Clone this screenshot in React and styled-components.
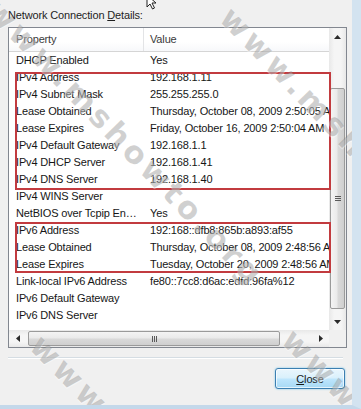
import React from "react";
import styled, { createGlobalStyle } from "styled-components";

const GlobalStyle = createGlobalStyle`
  html, body {
    margin: 0;
    padding: 0;
    background: #f0f0f0;
  }
  body {
    font-family: "Liberation Sans", Arial, sans-serif;
    font-size: 11px;
    letter-spacing: -0.15px;
    color: #1a1a1a;
  }
`;

const Window = styled.div`
  position: relative;
  width: 361px;
  height: 409px;
  box-sizing: border-box;
  padding-left: 8px;
  background: #f0f0f0;
  border-right: 9px solid #d3e3f0;
  border-bottom: 4px solid #c4d8ea;
  overflow: hidden;
  display: flex;
  flex-direction: column;
`;

const Label = styled.div`
  height: 27px;
  box-sizing: border-box;
  padding-top: 7px;
  line-height: 16px;
  color: #1e1e1e;
  u {
    text-decoration: underline;
  }
`;

const ListBox = styled.div`
  position: relative;
  width: 339px;
  height: 321px;
  box-sizing: border-box;
  border: 1px solid #828790;
  background: #fff;
  display: grid;
  grid-template-columns: 320px 17px;
  grid-template-rows: 302px 17px;
`;

const Viewport = styled.div`
  overflow: hidden;
  white-space: nowrap;
`;

const Header = styled.div`
  display: flex;
  height: 24px;
  box-sizing: border-box;
  border-bottom: 1px solid #d5d5d5;
  background: linear-gradient(#ffffff, #ffffff 60%, #f7f8fa);
`;

const HeaderCell = styled.div`
  flex: none;
  width: ${(p) => p.$w}px;
  box-sizing: border-box;
  padding-left: ${(p) => p.$pad}px;
  line-height: 23px;
  color: #3b3b3b;
  border-right: ${(p) => (p.$sep ? "1px solid #e3e4e6" : "none")};
`;

const Row = styled.div`
  display: flex;
  height: 17px;
  line-height: 17px;
`;

const Cell = styled.div`
  flex: none;
  width: ${(p) => p.$w}px;
  box-sizing: border-box;
  padding-left: ${(p) => p.$pad}px;
  padding-right: 4px;
  overflow: hidden;
  text-overflow: ${(p) => (p.$ellipsis ? "ellipsis" : "clip")};
  color: #161616;
`;

const VScroll = styled.div`
  display: flex;
  flex-direction: column;
  background: linear-gradient(90deg, #e8e8e8, #f5f5f5 30%, #f5f5f5 70%, #e8e8e8);
`;

const HScroll = styled.div`
  display: flex;
  background: linear-gradient(#e8e8e8, #f5f5f5 30%, #f5f5f5 70%, #e8e8e8);
`;

const Corner = styled.div`
  background: #f0f0f0;
`;

const ArrowBtn = styled.div`
  flex: none;
  width: 17px;
  height: 17px;
  display: flex;
  align-items: center;
  justify-content: center;
`;

const Track = styled.div`
  flex: 1;
  display: flex;
  flex-direction: ${(p) => (p.$vertical ? "column" : "row")};
`;

const Thumb = styled.div`
  flex: none;
  box-sizing: border-box;
  border: 1px solid #9a9a9a;
  border-radius: 2px;
  display: flex;
  align-items: center;
  justify-content: center;
  ${(p) =>
    p.$vertical
      ? `width: 15px; margin-left: 1px; background: linear-gradient(90deg, #f4f4f4, #eaeaea 45%, #d9d9d9 55%, #cfcfcf);`
      : `height: 15px; margin-top: 1px; background: linear-gradient(#f4f4f4, #eaeaea 45%, #d9d9d9 55%, #cfcfcf);`}
`;

const Grip = styled.div`
  display: flex;
  flex-direction: ${(p) => (p.$vertical ? "column" : "row")};
  gap: 1px;
  span {
    display: block;
    background: #5a5a5a;
    ${(p) => (p.$vertical ? "width: 6px; height: 1px;" : "width: 1px; height: 6px;")}
  }
`;

const Highlight = styled.div`
  position: absolute;
  left: 6px;
  top: ${(p) => p.$top}px;
  width: 316px;
  height: ${(p) => p.$h}px;
  box-sizing: border-box;
  border: 2px solid #c23b3f;
  pointer-events: none;
`;

const Separator = styled.div`
  margin-top: 9px;
  width: 335px;
  border-top: 1px solid #d5dde3;
  border-bottom: 1px solid #ffffff;
`;

const ButtonRow = styled.div`
  display: flex;
  justify-content: flex-end;
  margin-top: 9px;
  padding-right: 7px;
`;

const CloseButton = styled.button`
  width: 70px;
  height: 21px;
  box-sizing: border-box;
  border: 1px solid #3c7fb1;
  border-radius: 3px;
  background: linear-gradient(#eaf6fd, #d9f0fc 48%, #bee6fd 52%, #a7d9f5);
  box-shadow: inset 0 0 0 1px rgba(255, 255, 255, 0.7), 0 0 2px #6cc0ea;
  font-family: "Liberation Sans", Arial, sans-serif;
  font-size: 11px;
  letter-spacing: -0.15px;
  color: #1a1a1a;
  padding: 0;
  u {
    text-decoration: underline;
  }
`;

const Watermark = styled.div`
  position: absolute;
  left: ${(p) => p.$x}px;
  top: ${(p) => p.$y}px;
  transform-origin: left center;
  transform: rotate(46deg);
  font-family: "DejaVu Sans", sans-serif;
  font-weight: bold;
  font-size: 31px;
  letter-spacing: 4px;
  color: rgba(120, 120, 120, 0.34);
  white-space: nowrap;
  pointer-events: none;
  text-shadow: 1px 1px 0 rgba(255, 255, 255, 0.4);
`;

const Cursor = styled.svg`
  position: absolute;
  left: 146px;
  top: -6px;
`;

const rows = [
  ["DHCP Enabled", "Yes"],
  ["IPv4 Address", "192.168.1.11"],
  ["IPv4 Subnet Mask", "255.255.255.0"],
  ["Lease Obtained", "Thursday, October 08, 2009 2:50:05 AM"],
  ["Lease Expires", "Friday, October 16, 2009 2:50:04 AM"],
  ["IPv4 Default Gateway", "192.168.1.1"],
  ["IPv4 DHCP Server", "192.168.1.41"],
  ["IPv4 DNS Server", "192.168.1.40"],
  ["IPv4 WINS Server", ""],
  ["NetBIOS over Tcpip Enabled", "Yes"],
  ["IPv6 Address", "192:168::dfb8:865b:a893:af55"],
  ["Lease Obtained", "Thursday, October 08, 2009 2:48:56 AM"],
  ["Lease Expires", "Tuesday, October 20, 2009 2:48:56 AM"],
  ["Link-local IPv6 Address", "fe80::7cc8:d6ac:edfd:96fa%12"],
  ["IPv6 Default Gateway", ""],
  ["IPv6 DNS Server", ""],
];

const Tri = ({ dir }) => {
  const pts = {
    up: "0,4 3.5,0 7,4",
    down: "0,0 3.5,4 7,0",
    left: "4,0 0,3.5 4,7",
    right: "0,0 4,3.5 0,7",
  }[dir];
  const vert = dir === "up" || dir === "down";
  return (
    <svg width={vert ? 7 : 4} height={vert ? 4 : 7}>
      <polygon points={pts} fill="#2b2b2b" />
    </svg>
  );
};

const App = () => {
  return (
    <>
      <GlobalStyle />
      <Window>
        <Label>
          Network Connection <u>D</u>etails:
        </Label>
        <ListBox>
          <Viewport>
            <Header>
              <HeaderCell $w={135} $pad={7} $sep>
                Property
              </HeaderCell>
              <HeaderCell $w={250} $pad={6}>
                Value
              </HeaderCell>
            </Header>
            {rows.map(([k, v], i) => (
              <Row key={i}>
                <Cell $w={135} $pad={7} $ellipsis>
                  {k}
                </Cell>
                <Cell $w={250} $pad={6}>
                  {v}
                </Cell>
              </Row>
            ))}
          </Viewport>
          <VScroll>
            <ArrowBtn>
              <Tri dir="up" />
            </ArrowBtn>
            <Track $vertical>
              <Thumb $vertical style={{ marginTop: 43, height: 221 }}>
                <Grip $vertical>
                  <span />
                  <span />
                  <span />
                </Grip>
              </Thumb>
            </Track>
            <ArrowBtn>
              <Tri dir="down" />
            </ArrowBtn>
          </VScroll>
          <HScroll>
            <ArrowBtn>
              <Tri dir="left" />
            </ArrowBtn>
            <Track>
              <Thumb style={{ marginLeft: 2, width: 252 }}>
                <Grip>
                  <span />
                  <span />
                  <span />
                </Grip>
              </Thumb>
            </Track>
            <ArrowBtn>
              <Tri dir="right" />
            </ArrowBtn>
          </HScroll>
          <Corner />
          <Highlight $top={44} $h={118} />
          <Highlight $top={194} $h={51} />
        </ListBox>
        <Separator />
        <ButtonRow>
          <CloseButton>
            <u>C</u>lose
          </CloseButton>
        </ButtonRow>

        <Watermark $x={226} $y={-6}>www.mshowto.org</Watermark>
        <Watermark $x={-8} $y={-14}>www.mshowto.org</Watermark>
        <Watermark $x={36} $y={322}>www.mshowto.org</Watermark>
        <Watermark $x={288} $y={316}>www.mshowto.org</Watermark>

        <Cursor width="14" height="16" viewBox="0 0 14 16">
          <path d="M1 1 L1 13 L4 10 L6.5 15 L8.5 14 L6 9 L10 9 Z" fill="#fff" stroke="#222" strokeWidth="1" />
        </Cursor>
      </Window>
    </>
  );
};

export default App;
